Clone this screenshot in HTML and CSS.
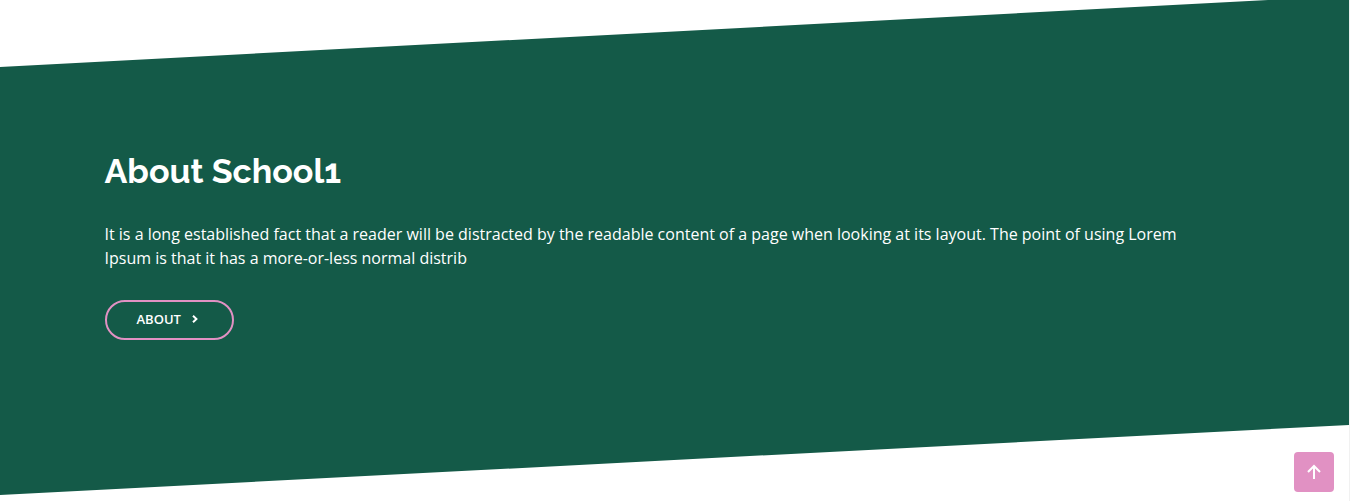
FILE: index.html
```html
<!DOCTYPE html>
<html lang="en">
<head>
<meta charset="utf-8">
<meta name="viewport" content="width=device-width, initial-scale=1">
<title>About School1</title>
<link rel="stylesheet" href="styles.css">
</head>
<body>
<section class="about">
  <div class="container">
    <h2 class="title">About School1</h2>
    <p class="text">It is a long established fact that a reader will be distracted by the readable content of a page when looking at its layout. The point of using Lorem Ipsum is that it has a more-or-less normal distrib</p>
    <a class="about-link" href="#about">ABOUT
      <svg class="chevron" viewBox="0 0 6 8" aria-hidden="true"><path d="M1 .8 4.4 4 1 7.2"/></svg>
    </a>
  </div>
</section>
<a class="back-to-top" href="#top" aria-label="Back to top">
  <svg class="arrow" viewBox="0 0 14 16" aria-hidden="true"><path d="M7 15V2M1 8l6-6 6 6"/></svg>
</a>
</body>
</html>
```
FILE: styles.css
```css
* { box-sizing: border-box; }
body {
  margin: 0;
  min-height: 100vh;
  border-right: 1px solid #f1f1f1;
  background: #fff;
  color: #fff;
  font-family: "Open Sans", sans-serif;
}
.about {
  padding: 149px 24px 155px;
  background: #145a48;
  clip-path: polygon(0 67px, 94% 0, 100% 0, 100% calc(100% - 70px), 0 100%);
}
.container {
  max-width: 1140px;
  margin: 0 auto;
  padding-right: 24px;
}
.title {
  margin: 0 0 29px;
  font-family: Raleway, "Open Sans", sans-serif;
  font-size: 34px;
  line-height: 44px;
  font-weight: 700;
}
.text {
  margin: 0 0 30px;
  font-size: 16px;
  line-height: 24px;
}
.about-link {
  display: inline-flex;
  align-items: center;
  gap: 11px;
  height: 40px;
  padding: 0 34px 2px 30px;
  border: 2px solid #e191c3;
  border-radius: 20px;
  color: #fff;
  font-size: 13px;
  font-weight: 600;
  text-decoration: none;
}
.chevron {
  width: 6px;
  height: 8px;
  fill: none;
  stroke: currentColor;
  stroke-width: 2;
}
.back-to-top {
  position: fixed;
  right: 16px;
  bottom: 9px;
  display: flex;
  align-items: center;
  justify-content: center;
  width: 40px;
  height: 40px;
  border-radius: 4px;
  background: #e191c3;
  color: #fff;
}
.arrow {
  width: 14px;
  height: 16px;
  fill: none;
  stroke: currentColor;
  stroke-width: 2;
}
```
